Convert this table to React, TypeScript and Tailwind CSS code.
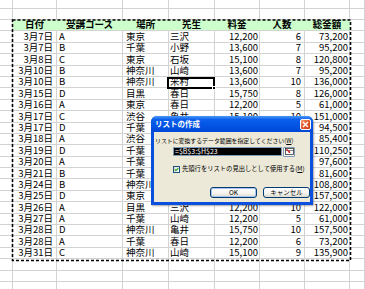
const WIDTHS = [
  "w-[13px]",
  "w-[44px]",
  "w-[66px]",
  "w-[46px]",
  "w-[46px]",
  "w-[45px]",
  "w-[45px]",
  "w-[45px]",
  "w-[15px]",
];

const ALIGN = [
  "",
  "justify-end pr-[3px]",
  "pl-[2px]",
  "pl-[3px]",
  "pl-[1px]",
  "justify-end pr-[1px]",
  "justify-end pr-[3px]",
  "justify-end pr-[1px]",
  "",
];

const HEAD = ["日付", "受講コース", "場所", "先生", "料金", "人数", "総金額"];

const ROWS: string[][] = [
  ["3月7日", "A", "東京", "三沢", "12,200", "6", "73,200"],
  ["3月7日", "B", "千葉", "小野", "13,600", "7", "95,200"],
  ["3月8日", "C", "東京", "石坂", "15,100", "8", "120,800"],
  ["3月10日", "B", "神奈川", "山崎", "13,600", "7", "95,200"],
  ["3月10日", "B", "神奈川", "米村", "13,600", "10", "136,000"],
  ["3月15日", "D", "目黒", "春日", "15,750", "8", "126,000"],
  ["3月16日", "A", "東京", "春日", "12,200", "5", "61,000"],
  ["3月17日", "C", "渋谷", "亀井", "15,100", "10", "151,000"],
  ["3月17日", "D", "千葉", "亀井", "15,750", "6", "94,500"],
  ["3月18日", "A", "渋谷", "三沢", "12,200", "7", "85,400"],
  ["3月19日", "D", "千葉", "春日", "15,750", "7", "110,250"],
  ["3月20日", "A", "千葉", "山崎", "12,200", "8", "97,600"],
  ["3月21日", "B", "千葉", "小野", "13,600", "6", "81,600"],
  ["3月24日", "B", "神奈川", "米村", "13,600", "8", "108,800"],
  ["3月25日", "D", "東京", "亀井", "15,750", "10", "157,500"],
  ["3月26日", "A", "目黒", "三沢", "12,200", "10", "122,000"],
  ["3月27日", "A", "千葉", "山崎", "12,200", "5", "61,000"],
  ["3月28日", "D", "神奈川", "亀井", "15,750", "10", "157,500"],
  ["3月28日", "A", "千葉", "春日", "12,200", "6", "73,200"],
  ["3月31日", "C", "神奈川", "山崎", "15,100", "9", "135,900"],
];

function Row({
  cells,
  head = false,
  short = false,
}: {
  cells?: string[];
  head?: boolean;
  short?: boolean;
}) {
  return (
    <div className={`flex shrink-0 ${short ? "h-[8.6px]" : "h-[11.4px]"}`}>
      {WIDTHS.map((w, i) => {
        const inTable = i > 0 && i < 8;
        const text = inTable && cells ? cells[i - 1] : "";
        return (
          <div
            key={i}
            className={`${w} flex shrink-0 items-center whitespace-nowrap border-b border-r border-[#d3d3d3] ${
              head && inTable
                ? "justify-center border-r-[#ccffcc] bg-[#ccffcc] font-bold"
                : ALIGN[i]
            }`}
          >
            {text}
          </div>
        );
      })}
    </div>
  );
}

function CollapseIcon() {
  return (
    <svg width="9" height="7" viewBox="0 0 9 7">
      <rect x="0.5" y="0.5" width="8" height="6" fill="#fff" stroke="#333" strokeWidth="0.8" />
      <line x1="0.5" y1="2.5" x2="8.5" y2="2.5" stroke="#333" strokeWidth="0.6" />
      <path d="M1.5 1.2 L5 4.6" stroke="#d21b1b" strokeWidth="1.2" />
      <path d="M4.8 3 L5.2 5 L3.2 4.8 Z" fill="#d21b1b" />
    </svg>
  );
}

function CreateListDialog() {
  return (
    <div className="absolute left-[151px] top-[116px] flex h-[89px] w-[162px] flex-col overflow-hidden rounded-t-[6px] bg-[#0b4fdf] shadow-[1px_1px_2px_rgba(0,0,0,0.35)]">
      <div className="flex h-[16px] shrink-0 items-center bg-[linear-gradient(180deg,#4b98f9_0%,#0d60ea_22%,#0356e5_55%,#0047d6_100%)] pl-[4px] pr-[2px]">
        <span className="text-[7.5px] font-bold leading-none text-white">リストの作成</span>
        <div className="ml-auto flex h-[11px] w-[11px] items-center justify-center rounded-[2px] border border-white bg-[linear-gradient(135deg,#f39a6e_0%,#e2572a_50%,#c83a14_100%)]">
          <svg width="7" height="7" viewBox="0 0 7 7">
            <path d="M1 1 L6 6 M6 1 L1 6" stroke="#fff" strokeWidth="1.4" />
          </svg>
        </div>
      </div>

      <div className="mx-[3px] mb-[3px] flex flex-1 flex-col bg-[#ece9d8] text-black">
        <p className="mt-[5px] h-[8px] whitespace-nowrap pl-[1px] text-[5.9px] leading-[8px]">
          リストに変換するデータ範囲を指定してください(<span className="underline">W</span>)
        </p>

        <div className="ml-[19px] mt-[2px] flex h-[9px] items-center gap-[1px]">
          <div className="flex h-full w-[109px] items-center border border-[#7f9db9] bg-black px-[1px] text-[7px] leading-none text-white">
            =$B$3:$H$23
          </div>
          <div className="flex h-[10px] w-[12px] items-center justify-center rounded-[1px] border border-[#7f9db9] bg-[#f7f7f4]">
            <CollapseIcon />
          </div>
        </div>

        <div className="ml-[19px] mt-[9px] flex h-[8px] items-center gap-[2px]">
          <div className="flex h-[7px] w-[7px] items-center justify-center border border-[#1c5180] bg-[linear-gradient(135deg,#dcdcd7,#ffffff)]">
            <svg width="6" height="5" viewBox="0 0 6 5">
              <path d="M0.8 2.4 L2.3 3.9 L5.2 0.8" fill="none" stroke="#21a121" strokeWidth="1.3" />
            </svg>
          </div>
          <span className="whitespace-nowrap text-[6.3px] leading-none">
            先頭行をリストの見出しとして使用する(<span className="underline">M</span>)
          </span>
        </div>

        <div className="ml-[56px] mt-[14px] flex gap-[6px]">
          <div className="flex h-[11px] w-[47px] items-center justify-center rounded-[3px] border border-[#003c74] bg-[linear-gradient(180deg,#ffffff_0%,#f4f3ee_60%,#dcd8cb_100%)] text-[6.5px] leading-none shadow-[inset_0_0_0_1px_#a9c4f0]">
            OK
          </div>
          <div className="flex h-[11px] w-[47px] items-center justify-center rounded-[3px] border border-[#003c74] bg-[linear-gradient(180deg,#ffffff_0%,#f4f3ee_60%,#dcd8cb_100%)] text-[6.5px] leading-none">
            キャンセル
          </div>
        </div>
      </div>
    </div>
  );
}

export default function App() {
  return (
    <div className="relative h-[289px] w-[365px] overflow-hidden bg-white font-['Noto_Sans_CJK_JP','Noto_Sans',sans-serif] text-[9.5px] leading-none text-black">
      <div className="flex flex-col">
        <Row short />
        <Row />
        <Row head cells={HEAD} />
        {ROWS.map((r, i) => (
          <Row key={i} cells={r} />
        ))}
        <Row />
        <Row />
        <Row />
        <Row />
      </div>

      {/* copy range marquee */}
      <svg
        className="pointer-events-none absolute left-[11px] top-[19px]"
        width="341"
        height="243"
      >
        <rect
          x="1.5"
          y="1"
          width="338"
          height="240.5"
          fill="none"
          stroke="#000"
          strokeWidth="1.6"
          strokeDasharray="3 2"
        />
      </svg>

      {/* active cell */}
      <div className="pointer-events-none absolute left-[167px] top-[76.5px] h-[12px] w-[48px] border-2 border-black">
        <div className="absolute -bottom-[3px] -right-[3px] h-[4px] w-[4px] border border-white bg-black" />
      </div>

      <CreateListDialog />
    </div>
  );
}
